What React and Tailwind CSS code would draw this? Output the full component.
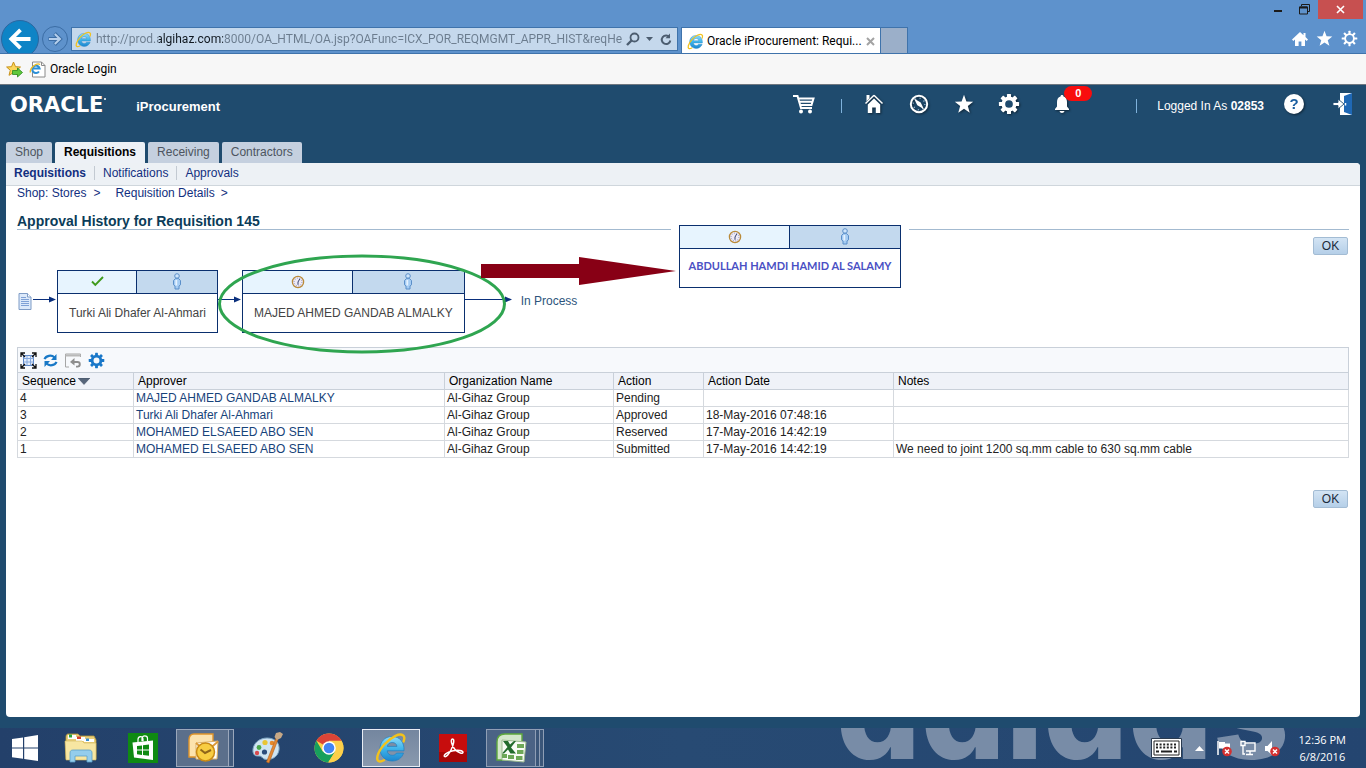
import React from "react";

const gearAngles = [0, 45, 90, 135, 180, 225, 270, 315];

function Gear({ size, color, hub, tooth = 4, stroke = 4, className = "" }) {
  return (
    <svg width={size} height={size} viewBox="0 0 24 24" className={className} aria-hidden="true">
      {gearAngles.map((a) => (
        <rect key={a} x={12 - tooth / 2} y="1" width={tooth} height="5" rx="0.6" fill={color} transform={`rotate(${a} 12 12)`} />
      ))}
      <circle cx="12" cy="12" r="6.2" fill={hub} stroke={color} strokeWidth={stroke} />
    </svg>
  );
}

function Star({ size, color = "#fff" }) {
  return (
    <svg width={size} height={size} viewBox="0 0 24 24" aria-hidden="true">
      <path fill={color} d="M12 1l2.9 7.9 8.1.3-6.4 5.1 2.3 8.1L12 17.6l-6.9 4.8 2.3-8.1L1 9.200l8.100-.3z" />
    </svg>
  );
}

function IeIcon({ size }) {
  return (
    <svg width={size} height={size} viewBox="0 0 32 32" className="shrink-0" aria-hidden="true">
      <defs>
        <linearGradient id="ieBlue" x1="0" y1="0" x2="0" y2="1">
          <stop offset="0" stopColor="#8fdcf9" />
          <stop offset="0.5" stopColor="#3fb4ea" />
          <stop offset="1" stopColor="#1c86cf" />
        </linearGradient>
      </defs>
      <path
        fill="url(#ieBlue)"
        stroke="#1f7fc0"
        strokeWidth="0.7"
        d="M17 4.500C9.800 4.500 5 9.800 5 16.700 5 23.800 10 29 17.200 29c5.600 0 9.700-2.900 11.300-7.900h-7c-.9 1.500-2.300 2.200-4.200 2.200-3 0-4.900-1.700-5.100-4.500H29C29.500 10.300 25 4.500 17 4.500zm-4.700 9.900c.5-2.500 2.300-3.900 4.900-3.900s4.400 1.400 4.800 3.900z"
      />
      <path
        fill="none"
        stroke="#f2c21c"
        strokeWidth="2.400"
        strokeLinecap="round"
        d="M28.600 9.500C31 3.500 27 .8 20.500 3.800 12.500 7.500 4.500 16.500 2.500 24c-1.200 5.200 1.500 6.800 6.500 4.300"
      />
    </svg>
  );
}

function Person() {
  return (
    <svg width="10" height="17" viewBox="0 0 10 17" aria-hidden="true">
      <circle cx="5" cy="3" r="2.300" fill="#cfe5fb" stroke="#5b8fc9" />
      <path d="M3.800 5.300h2.400L8.500 7.500v4.300L7 13v3H3v-3l-1.500-1.200V7.500z" fill="#a5ccf3" stroke="#5b8fc9" />
      <path d="M4.300 7v5.500" stroke="#e6f2ff" strokeWidth="1.800" />
    </svg>
  );
}

function Clock() {
  return (
    <svg width="14" height="14" viewBox="0 0 14 14" aria-hidden="true">
      <circle cx="7" cy="7" r="5.600" fill="#eeeaf6" stroke="#b98a3a" strokeWidth="1.300" />
      <circle cx="7" cy="7" r="3.900" fill="none" stroke="#7f86b4" strokeWidth="0.900" strokeDasharray="1 1.400" />
      <path d="M8.800 3.800L7 7v2.800" stroke="#34406f" strokeWidth="1" fill="none" />
    </svg>
  );
}

function Check() {
  return (
    <svg width="13" height="11" viewBox="0 0 13 11" aria-hidden="true">
      <path d="M1 5.500l3.300 3.300L12 1" fill="none" stroke="#3f9a1c" strokeWidth="1.900" />
    </svg>
  );
}

function Connector({ width }) {
  return (
    <svg width={width} height="8" viewBox={`0 0 ${width} 8`} className="mt-[25px] shrink-0" aria-hidden="true">
      <path d={`M0 4.500H${width - 6}`} stroke="#0a2f7c" />
      <path d={`M${width - 8} 1.500L${width - 1} 4.500L${width - 8} 7.500z`} fill="#0a2f7c" />
    </svg>
  );
}

function ApprovalNode({ status, children }) {
  return (
    <div className="shrink-0 border border-[#0a2f6e] bg-white">
      <div className="grid h-[23px] grid-cols-2 border-b border-[#0a2f6e]">
        <div className="flex items-center justify-center border-r border-[#0a2f6e] bg-[#e7f4fe] pb-px">{status}</div>
        <div className="flex items-center justify-center bg-[#c3d9ee] pb-[2px]">
          <Person />
        </div>
      </div>
      {children}
    </div>
  );
}

function OkButton() {
  return (
    <button className="h-[18px] w-[35px] rounded-xs border border-[#a3bcd4] bg-linear-to-b from-[#d3e4f4] to-[#b5cfe8] text-xs leading-4 text-[#1c2c3c]">
      OK
    </button>
  );
}

function BrowserChrome() {
  return (
    <header className="bg-[#5e92cc]">
      <div className="flex h-5 items-start justify-end pr-[3px]">
        <button aria-label="Minimize" className="flex h-5 w-6 items-center justify-center">
          <svg width="10" height="10" aria-hidden="true"><path d="M1 6h8" stroke="#1b1b1b" strokeWidth="2" /></svg>
        </button>
        <button aria-label="Restore" className="flex h-[19px] w-7 items-center justify-center">
          <svg width="11" height="11" fill="none" stroke="#1b1b1b" aria-hidden="true">
            <path d="M2.500 2V.5h8v7H9M.5 3h8v7h-8z" />
            <path d="M.5 3.500h8" strokeWidth="2" />
          </svg>
        </button>
        <button aria-label="Close" className="flex h-[19px] w-[45px] items-center justify-center bg-[#c75050]">
          <svg width="9" height="9" aria-hidden="true"><path d="M1 1l7 7M8 1L1 8" stroke="#fff" strokeWidth="1.600" /></svg>
        </button>
      </div>
      <div className="flex h-[34px] items-start overflow-hidden border-b border-[#3f73ab] pl-px font-[Roboto,sans-serif]">
        <button aria-label="Back" className="flex size-[38px] shrink-0 items-center justify-center rounded-full border border-[#2b67a0] bg-[#0e84c6]">
          <svg width="24" height="24" fill="none" stroke="#fff" strokeWidth="3.800" aria-hidden="true">
            <path d="M22.500 12H4M12.500 2.800L3.300 12l9.200 9.200" />
          </svg>
        </button>
        <button aria-label="Forward" className="mt-[6px] ml-[3px] flex size-[26px] shrink-0 items-center justify-center rounded-full border border-[#3b6da5]">
          <svg width="16" height="16" fill="none" aria-hidden="true">
            <path d="M1.500 8h12M7.500 2.500L13 8l-5.500 5.500" stroke="#3b6da5" strokeWidth="4" />
            <path d="M2 8h11M7.800 3L13 8l-5.200 5" stroke="#b5cfec" strokeWidth="2" />
          </svg>
        </button>
        <div className="mt-[7px] ml-[3px] flex h-6 w-[607px] items-center border border-[#3f73ab] bg-[#c5d8ec] pl-[3px]">
          <IeIcon size={17} />
          <input
            aria-label="Address"
            defaultValue="http://prod.algihaz.com:8000/OA_HTML/OA.jsp?OAFunc=ICX_POR_REQMGMT_APPR_HIST&reqHe"
            className="ml-1 h-5 min-w-0 flex-1 bg-[linear-gradient(to_right,#6b7c8e_63px,#101820_63px,#101820_127px,#6b7c8e_127px)] bg-clip-text text-[12px] text-transparent outline-none"
          />
          <button aria-label="Search" className="flex w-5 justify-center">
            <svg width="14" height="14" fill="none" stroke="#4c5d70" strokeWidth="1.800" aria-hidden="true">
              <circle cx="8.500" cy="5.500" r="4" /><path d="M5.500 8.500L1 13" strokeWidth="2.400" />
            </svg>
          </button>
          <button aria-label="Search options" className="flex w-3 justify-center">
            <svg width="7" height="4" aria-hidden="true"><path d="M0 0h7L3.500 4z" fill="#4c5d70" /></svg>
          </button>
          <button aria-label="Refresh" className="flex w-[22px] justify-center">
            <svg width="12" height="13" fill="none" stroke="#4c5d70" strokeWidth="2" aria-hidden="true">
              <path d="M9.500 4.200A4.300 4.300 0 1 0 10.300 7.500" /><path d="M10 .5v4.700H5.500z" fill="#4c5d70" stroke="none" />
            </svg>
          </button>
        </div>
        <div className="mt-[7px] ml-[3px] flex h-[27px] w-[200px] items-center border-x border-t border-[#3f73ab] bg-white px-[5px] text-[12px] text-black">
          <IeIcon size={17} />
          <span className="ml-[3px] flex-1 whitespace-nowrap">Oracle iProcurement: Requi...</span>
          <button aria-label="Close tab">
            <svg width="9" height="9" aria-hidden="true"><path d="M1 1l7 7M8 1L1 8" stroke="#a3a3a3" strokeWidth="2" /></svg>
          </button>
        </div>
        <button aria-label="New tab" className="mt-[7px] h-[27px] w-[27px] border-t border-r border-[#3f73ab] bg-[#9bafc9]" />
        <div className="mt-[10px] ml-auto flex items-center gap-2 pr-2">
          <button aria-label="Home">
            <svg width="16" height="16" fill="#fff" aria-hidden="true">
              <path d="M8 1L0 8.500l1.300 1.400L3 8.500V15h3.600v-4.500h2.800V15H13V8.500l1.700 1.400L16 8.500l-2.500-2.400V2h-2v2.200z" />
            </svg>
          </button>
          <button aria-label="Favorites"><Star size={17} /></button>
          <button aria-label="Tools"><Gear size={17} color="#fff" hub="#5e92cc" tooth={3} stroke={2.6} /></button>
        </div>
      </div>
      <nav className="flex h-[31px] items-center border-b border-[#6f7780] bg-[#f7f7f7] pl-[6px] font-[Roboto,sans-serif] text-[12px] text-black">
        <button aria-label="Add to favorites bar">
          <svg width="17" height="17" viewBox="0 0 17 17" aria-hidden="true">
            <path d="M7.500 1l2 4.700 5 .3-3.800 3.300 1.300 5-4.500-2.700L3 14.300l1.300-5L.6 6l4.900-.3z" fill="#fbd65a" stroke="#c8921b" />
            <path d="M6.500 9.500h5V7l5 4.500-5 4.500v-2.500h-5z" fill="#5fc83c" stroke="#2b8a1f" strokeWidth="0.800" />
          </svg>
        </button>
        <a href="#login" className="ml-[6px] flex items-center gap-1">
          <svg width="17" height="17" viewBox="0 0 17 17" aria-hidden="true">
            <path d="M3.500 1h9l3.500 3.500V16h-12.500z" fill="#fff" stroke="#8a8a8a" />
            <path d="M12.500 1v3.500H16" fill="none" stroke="#8a8a8a" />
            <path d="M10 10.500a3.700 3.700 0 1 1 .6-3H4" fill="none" stroke="#2b8fd6" strokeWidth="2" />
            <path d="M11 3.500C8 1.500 1 6 1.200 11.500" fill="none" stroke="#eebb22" strokeWidth="1.300" />
          </svg>
          Oracle Login
        </a>
      </nav>
    </header>
  );
}

function Brand() {
  return (
    <div className="flex h-[57px] items-start text-white">
      <div className="mt-2 ml-[10px] flex h-6 items-center">
        <span className="font-['DejaVu_Sans',sans-serif] text-[21px] leading-6 font-bold">ORACLE</span>
        <svg width="4" height="12" className="mb-1" aria-hidden="true"><circle cx="2" cy="2" r="1" fill="#fff" /></svg>
      </div>
      <h1 className="mt-[14px] ml-auto text-[13px] leading-4 font-bold">iProcurement</h1>
    </div>
  );
}

function HeaderTools() {
  const ink = "drop-shadow-[1px_1px_1px_rgba(0,0,0,0.5)]";
  return (
    <div className="flex items-start pt-[7px] text-xs text-white">
      <div className="flex h-6 items-center">
        <button aria-label="Shopping cart" className="flex w-6 justify-center">
          <svg width="22" height="20" fill="none" stroke="#fff" strokeWidth="2" aria-hidden="true">
            <path d="M0 2h4.500l3.500 12h11" />
            <path d="M5.500 4.500H20.500L18.500 11H7.500M7 7.700h12" />
            <circle cx="8" cy="17.500" r="2" fill="#fff" stroke="none" /><circle cx="17" cy="17.500" r="2" fill="#fff" stroke="none" />
          </svg>
        </button>
        <span className="mt-1 ml-[25px] h-[14px] w-px bg-[#7fb2dc]" />
        <div className="ml-5 flex items-center gap-[21px]">
          <button aria-label="Home" className={"flex w-6 justify-center " + ink}>
            <svg width="20" height="20" fill="#fff" aria-hidden="true">
              <path d="M10 1.200L1.500 9.500M10 1.200l8.500 8.300" stroke="#fff" strokeWidth="1.500" fill="none" />
              <path d="M2.500 1h3v3.200l-3 3zM10 4.500L3.800 10.500V19h4.400v-5.500h3.600V19h4.400v-8.500z" />
            </svg>
          </button>
          <button aria-label="Navigator" className={"flex w-6 justify-center " + ink}>
            <svg width="20" height="20" fill="none" aria-hidden="true">
              <circle cx="10" cy="10" r="8.200" stroke="#fff" strokeWidth="2" />
              <circle cx="10" cy="10" r="5.800" stroke="#9dbcd4" strokeWidth="1.400" strokeDasharray="1 3.550" />
              <path d="M5 4.500l6.700 4 3.300 6.700-6.700-4z" fill="#fff" />
            </svg>
          </button>
          <button aria-label="Favorites" className={"flex w-6 justify-center " + ink}><Star size={20} /></button>
          <button aria-label="Settings" className={"flex w-6 justify-center " + ink}><Gear size={22} color="#fff" hub="#1f4b6e" stroke={4} tooth={4.4} /></button>
        </div>
        <button aria-label="Notifications" className="relative ml-[29px] flex w-6 justify-center">
          <svg width="14" height="18" fill="#fff" className={ink} aria-hidden="true">
            <path d="M7 0c1 0 1.500.7 1.500 1.500C11 2.200 12 4.500 12 7v4.500l2 2.500v1H0v-1l2-2.500V7c0-2.500 1-4.800 3.500-5.500C5.500.7 6 0 7 0zM4.500 16h5c-.5 2.500-4.500 2.500-5 0z" />
          </svg>
          <span className="absolute -top-[9px] left-[14px] flex h-[15px] w-7 items-center justify-center rounded-full bg-[#f80d0d] text-[11px] font-bold">0</span>
        </button>
        <span className="mt-1 ml-[62px] h-[14px] w-px bg-[#7fb2dc]" />
        <span className="mt-1 ml-5">Logged In As <b>02853</b></span>
        <button aria-label="Help" className={"ml-5 flex size-5 items-center justify-center rounded-full bg-white text-[15px] font-bold text-[#1c5fa0] " + ink}>?</button>
        <button aria-label="Logout" className="mr-[10px] ml-7">
          <svg width="24" height="24" aria-hidden="true">
            <path d="M8 1h12v22H8z" fill="#fff" />
            <path d="M12 4l8-3v22l-8-3z" fill="#1f68b5" />
            <path d="M13.500 11v2.500" stroke="#fff" strokeWidth="1.500" />
            <path d="M1 10.500h5V7l6 5-6 5v-3.500H1z" fill="#fff" stroke="#1f4b6e" strokeWidth="0.900" />
          </svg>
        </button>
      </div>
    </div>
  );
}

const tabs = ["Shop", "Requisitions", "Receiving", "Contractors"];

const rows = [
  ["4", "MAJED AHMED GANDAB ALMALKY", "Al-Gihaz Group", "Pending", "", ""],
  ["3", "Turki Ali Dhafer Al-Ahmari", "Al-Gihaz Group", "Approved", "18-May-2016 07:48:16", ""],
  ["2", "MOHAMED ELSAEED ABO SEN", "Al-Gihaz Group", "Reserved", "17-May-2016 14:42:19", ""],
  ["1", "MOHAMED ELSAEED ABO SEN", "Al-Gihaz Group", "Submitted", "17-May-2016 14:42:19", "We need to joint 1200 sq.mm cable to 630 sq.mm cable"],
];

function ApprovalFlow() {
  return (
    <div className="relative mt-[15px] flex items-start pl-px text-xs">
      <svg width="14" height="17" className="mt-[23px] mr-px shrink-0" aria-hidden="true">
        <path d="M1 .5h8.500l3.500 3.500v12.500H1z" fill="#dce9fa" stroke="#7f9cc6" />
        <path d="M9.500.5V4H13" fill="#fff" stroke="#7f9cc6" />
        <path d="M3 4.500h5M3 6.500h8M3 8.500h8M3 10.500h8M3 12.500h8" stroke="#7fa1d6" />
      </svg>
      <Connector width={24} />
      <ApprovalNode status={<Check />}>
        <p className="px-[11px] leading-[38px] text-[#444]">Turki Ali Dhafer Al-Ahmari</p>
      </ApprovalNode>
      <Connector width={24} />
      <ApprovalNode status={<Clock />}>
        <p className="px-[11px] leading-[38px] text-[#444]">MAJED AHMED GANDAB ALMALKY</p>
      </ApprovalNode>
      <Connector width={48} />
      <span className="mt-[23px] ml-2 leading-4 text-[#2d547c]">In Process</span>

      <svg width="292" height="100" fill="none" className="absolute -top-[16px] left-[200px]" aria-hidden="true">
        <ellipse cx="145" cy="50" rx="142.500" ry="48" stroke="#2fa550" strokeWidth="3" />
      </svg>
      <div className="absolute -top-[45px] left-[654px] bg-white px-2">
        <div className="w-[222px]">
          <ApprovalNode status={<Clock />}>
            <p className="text-center font-['Lato',sans-serif] text-[11px] leading-[34px] font-bold whitespace-nowrap text-[#4a50c4] pb-1">
              ABDULLAH HAMDI HAMID AL SALAMY
            </p>
          </ApprovalNode>
        </div>
      </div>
      <svg width="196" height="28" className="absolute -top-[13px] left-[464px]" aria-hidden="true">
        <path d="M0 7h98V0l97 14-97 14v-7H0z" fill="#880015" />
      </svg>
    </div>
  );
}

function HistoryTable() {
  return (
    <section className="mt-[14px]">
      <div className="flex h-[25px] items-center gap-[6px] border border-b-0 border-[#c9d0d9] bg-[#f7f9fc] pl-[2px]">
        <button aria-label="Detach">
          <svg width="17" height="17" fill="none" aria-hidden="true">
            <rect x="3.500" y="3.500" width="10" height="10" fill="#e3edfb" stroke="#5b84c4" />
            <path d="M3.500 6.500h10M3.500 10h10M7 3.500v10M10.500 3.500v10" stroke="#86a9de" />
            <path d="M1 5V1h4M12 1h4v4M16 12v4h-4M5 16H1v-4M1 1l4 4M16 1l-4 4M16 16l-4-4M1 16l4-4" stroke="#111" strokeWidth="1.300" />
          </svg>
        </button>
        <button aria-label="Refresh">
          <svg width="15" height="15" fill="none" stroke="#1878c6" strokeWidth="2.200" aria-hidden="true">
            <path d="M1.500 6.200C3 2.500 8.500 1.500 11.500 4.500M13.500 8.800C12 12.500 6.500 13.500 3.500 10.500" />
            <path d="M13.500 1v6H8zM1.500 14V8H7z" fill="#1878c6" stroke="none" />
          </svg>
        </button>
        <button aria-label="Reset view" className="ml-px">
          <svg width="17" height="15" fill="none" aria-hidden="true">
            <path d="M15.500 4V1H.5v13H4" stroke="#a6a6a6" /><path d="M.5 2.500h15" stroke="#b9b9b9" strokeWidth="2" />
            <path d="M8 9h4.500a2.300 2.300 0 0 1 0 4.600H11" stroke="#8e8e8e" strokeWidth="1.900" /><path d="M9.500 5v7.500L5 9z" fill="#8e8e8e" />
          </svg>
        </button>
        <button aria-label="Table settings"><Gear size={17} color="#1a78c9" hub="#f7f9fc" stroke={4} /></button>
      </div>
      <table className="w-full table-fixed border-collapse text-left text-xs leading-4 text-[#222]">
        <colgroup>
          <col className="w-[116px]" /><col className="w-[311px]" /><col className="w-[169px]" />
          <col className="w-[90px]" /><col className="w-[190px]" /><col />
        </colgroup>
        <thead className="bg-[#eff2f8]">
          <tr>
            {["Sequence", "Approver", "Organization Name", "Action", "Action Date", "Notes"].map((h) => (
              <th key={h} scope="col" className="border border-[#c9d0d9] px-1 py-0 font-normal text-black">
                {h}
                {h === "Sequence" && (
                  <svg width="12" height="7" className="ml-[2px] inline-block align-baseline" aria-hidden="true">
                    <path d="M0 0h12L6 6.500z" fill="#56657a" stroke="#39475c" strokeWidth="0.500" />
                  </svg>
                )}
              </th>
            ))}
          </tr>
        </thead>
        <tbody>
          {rows.map((r) => (
            <tr key={r[0]}>
              {r.map((c, i) => (
                <td key={i} className="h-[17px] border border-[#d5d9de] px-[2px] py-0 whitespace-nowrap">
                  {i === 1 ? <a href="#approver" className="text-[#17437a]">{c}</a> : c}
                </td>
              ))}
            </tr>
          ))}
        </tbody>
      </table>
    </section>
  );
}

function Page() {
  return (
    <main className="flex flex-1 flex-col bg-[#1f4b6e] pb-[11px] font-['Liberation_Sans',Arial,sans-serif]">
      <div className="flex items-start justify-between">
        <div className="w-[220px]"><Brand /></div>
        <HeaderTools />
      </div>
      <nav className="flex gap-[3px] pl-[6px] text-xs">
        {tabs.map((t) => (
          <a
            key={t}
            href={"#" + t}
            className={
              t === "Requisitions"
                ? "rounded-t-xs bg-[#edf1f6] px-[9px] leading-[21px] font-bold text-black"
                : "rounded-t-xs bg-[#c5d0df] px-[9px] leading-[21px] text-[#4d5560]"
            }
          >
            {t}
          </a>
        ))}
      </nav>
      <div className="mr-[6px] ml-[6px] flex-1 rounded-b-sm rounded-tr-sm bg-white">
        <nav className="flex h-[23px] items-center rounded-tr-sm border-b border-[#cfd6dc] bg-[#edf1f5] pb-[2px] pl-2 text-xs text-[#122f80]">
          <a href="#req" className="font-bold">Requisitions</a>
          <span className="mx-2 h-[14px] w-px bg-[#c3cad2]" />
          <a href="#not">Notifications</a>
          <span className="mx-2 h-[14px] w-px bg-[#c3cad2]" />
          <a href="#app">Approvals</a>
        </nav>
        <div className="px-[11px]">
          <nav className="flex text-xs leading-[14px] text-[#122f80]">
            <a href="#stores">Shop: Stores</a>
            <span className="ml-[7px]">&gt;</span>
            <a href="#details" className="ml-[15px]">Requisition Details</a>
            <span className="ml-[6px]">&gt;</span>
          </nav>
          <h2 className="mt-[13px] border-b border-[#a3bad0] text-[14px] leading-4 font-bold text-[#0b3c59]">
            Approval History for Requisition 145
          </h2>
          <div className="mt-[7px] flex justify-end pr-px"><OkButton /></div>
          <ApprovalFlow />
          <HistoryTable />
          <div className="mt-8 flex justify-end pr-px"><OkButton /></div>
        </div>
      </div>
    </main>
  );
}

function Task({ label, children }) {
  return (
    <button aria-label={label} className="flex h-10 w-[62px] shrink-0 items-center justify-center">
      {children}
    </button>
  );
}

function Taskbar() {
  return (
    <footer className="relative flex h-10 items-center overflow-hidden bg-linear-to-r from-[#23406a] via-[#274a73] to-[#244570]">
      <span
        aria-hidden="true"
        className="absolute -top-[97px] left-[836px] font-['Inter',sans-serif] text-[133px] leading-[160px] font-extrabold text-[#788ca7] [font-feature-settings:'cv11','ss01']"
      >
        adidas
      </span>
      <button aria-label="Start" className="flex h-10 w-[50px] shrink-0 items-center justify-center">
        <svg width="26" height="26" fill="#fff" aria-hidden="true">
          <path d="M0 4l11-1.600v10H0zM12.200 2.200L26 0v12.400H12.200zM0 13.600h11v10.200L0 22.200zM12.200 13.600H26V26l-13.800-2z" />
        </svg>
      </button>
      <Task label="File Explorer">
        <svg width="34" height="30" aria-hidden="true">
          <path d="M2 4c0-2 1-3 2-3h10l2 2h14l2 4v19H2z" fill="#e9cf7a" stroke="#b99a3c" strokeWidth="0.800" />
          <path d="M4 2h8v4H4z" fill="#fff" /><path d="M5 1.500h3v3H5z" fill="#2aa53c" />
          <path d="M12 4h9v4h-9z" fill="#fff" /><path d="M13 3.500h4v2.500h-4z" fill="#d5422e" />
          <path d="M20 6h10v3H20z" fill="#fff" /><path d="M22 5.500h3v2.500h-3z" fill="#3a8fd0" />
          <path d="M1 8h17l2 2h12v17H2z" fill="#f7e6a2" stroke="#d1b65c" strokeWidth="0.600" />
          <path d="M6 29V20c0-2 1-3 3-3h16c2 0 3 1 3 3v9h-5v-6H11v6z" fill="#94cdec" stroke="#5a9fc8" strokeWidth="0.800" />
        </svg>
      </Task>
      <Task label="Store">
        <svg width="30" height="30" fill="none" aria-hidden="true">
          <path d="M0 0h30v30H0z" fill="#0f8a12" />
          <path d="M4.500 9.500L25 7.500V27L6 24.500z" fill="#fff" />
          <path d="M10 9V6.500c0-3.500 5-4 5-.5v2.500M14 8V5.500c0-3.500 5.500-3.500 5.500 0V8" stroke="#fff" strokeWidth="1.200" />
          <path d="M9 13l5-.6v4.200H9zM15 12.200l6-.7v5.100h-6zM9 17.600h5v4.300l-5-.6zM15 17.600h6v5.200l-6-.8z" fill="#0f8a12" />
        </svg>
      </Task>
      <Task label="Outlook">
        <span className="flex h-[38px] w-[58px]">
          <span className="flex flex-1 items-center justify-center border border-[#9aa7bb] bg-[#5b6f8b]">
            <svg width="32" height="30" aria-hidden="true">
              <path d="M2 7c0-4 2-6 5-6h19v10H14v13H2z" fill="#fce3ae" stroke="#e0952b" strokeWidth="1.400" />
              <path d="M9 10l22-2-1 18H9z" fill="#fdfdfb" stroke="#ddb26a" />
              <path d="M9 10l10 9L31 8.500" fill="none" stroke="#dc9a38" strokeWidth="1.800" />
              <circle cx="18.500" cy="19" r="9" fill="#f8cd42" stroke="#c98a15" strokeWidth="1.500" />
              <path d="M13.500 16.500l4.500 3.500 6-3" fill="none" stroke="#8f651a" strokeWidth="2" />
            </svg>
          </span>
          <span className="w-[5px] border border-l-0 border-[#9aa7bb] bg-[#415a7c]" />
        </span>
      </Task>
      <Task label="Paint">
        <svg width="34" height="32" aria-hidden="true">
          <path d="M3 20C2 12 9 6 17 6s13 5 12 12-8 11-15 9c-2-1-2-3-5-3s-5 0-6-4z" fill="#cfe4f2" stroke="#7fa6c4" />
          <circle cx="9" cy="15.500" r="2.400" fill="#49a64a" /><circle cx="15" cy="10.500" r="2.600" fill="#e9c534" />
          <circle cx="7" cy="21" r="2.200" fill="#d84b50" /><circle cx="22" cy="11" r="2.300" fill="#e5892d" /><circle cx="14.500" cy="20" r="2.600" fill="#2c4d7c" />
          <path d="M26 6l2 1.500L19 31l-2.500-1z" fill="#e48834" stroke="#b25f18" strokeWidth="0.600" />
          <path d="M24.500 5L26 1l4-1 3 2-2 4-4 2z" fill="#c7a886" />
        </svg>
      </Task>
      <Task label="Chrome">
        <svg width="30" height="30" viewBox="0 0 30 30" aria-hidden="true">
          <circle cx="15" cy="15" r="14.500" fill="#fdd04a" />
          <path d="M15 15L2.400 7.750A14.500 14.500 0 0 1 27.600 7.750H15z" fill="#db4437" />
          <path d="M2.400 7.750A14.500 14.500 0 0 0 14 29.500L21.300 18.600 15 15 8.700 18.600z" fill="#17a05d" />
          <path d="M15 8.200h12.800A14.500 14.500 0 0 1 14.500 29.500L21 18.500z" fill="#fdd04a" />
          <circle cx="15" cy="15" r="6.800" fill="#fff" /><circle cx="15" cy="15" r="5.300" fill="#4285f4" />
        </svg>
      </Task>
      <Task label="Internet Explorer">
        <span className="flex h-[38px] w-[58px] items-center justify-center border border-[#e8edf4] bg-linear-to-b from-[#74869f] to-[#8999ae]">
          <IeIcon size={32} />
        </span>
      </Task>
      <Task label="Acrobat Reader">
        <svg width="28" height="28" fill="none" aria-hidden="true">
          <path d="M0 0h28v28H0z" fill="#c70d0d" /><path d="M0 18h28v10H0z" fill="#a80606" />
          <path d="M13.500 5c2.500 0 1 6-1.500 11-2 4-5 7.500-6.500 6.500S8 18 14 16.800c5-1 10-.3 10 1.500s-4.500 1-8-2.800-4.800-10.500-2.500-10.500z" stroke="#fff" strokeWidth="1.500" />
        </svg>
      </Task>
      <Task label="Excel">
        <span className="flex h-[38px] w-[58px]">
          <span className="flex flex-1 items-center justify-center border border-[#8f9eb5] bg-[#4b6385]">
            <svg width="32" height="30" aria-hidden="true">
              <path d="M2 9c0-5 3-8 8-8h17v9H14v17H2z" fill="#d4e7cb" stroke="#5da83c" strokeWidth="1.400" />
              <path d="M7 7l24 2-2 20-22-2z" fill="#f8fbf5" stroke="#9cba90" />
              <path d="M22 11h7v4h-7zM22 17h6.500v4H22zM13 22h6v4h-6zM21 23h6.500v4H21zM7 21h5v4H7z" fill="#6da858" />
              <path d="M8 8h5l2 3.500L19 8h2l-5 6.500 5 6h-5.500l-2.500-4-4 4H7l5.500-6.500z" fill="#226b2c" />
            </svg>
          </span>
          <span className="w-1 border border-l-0 border-[#8f9eb5] bg-[#3b5679]" />
          <span className="w-1 border border-l-0 border-[#8f9eb5] bg-[#3b5679]" />
        </span>
      </Task>
      <div className="relative ml-auto flex items-center pr-5 font-['Open_Sans','Noto_Sans',sans-serif] text-[11px] text-white">
        <button aria-label="Touch keyboard">
          <svg width="31" height="20" fill="none" aria-hidden="true">
            <path d="M.5.500h30v19H.5z" fill="#fff" stroke="#2b3b50" />
            <path d="M3 3h25v14H3z" stroke="#222" />
            <path d="M5 6.500h21M5 9.500h21" stroke="#222" strokeWidth="2" strokeDasharray="2 1.600" />
            <path d="M5 13.500h3M10 13.500h11M23 13.500h3" stroke="#222" strokeWidth="2" />
          </svg>
        </button>
        <button aria-label="Show hidden icons" className="ml-[13px]">
          <svg width="9" height="5" aria-hidden="true"><path d="M4.500 0L9 5H0z" fill="#fff" /></svg>
        </button>
        <button aria-label="Action Center" className="ml-3">
          <svg width="17" height="17" aria-hidden="true">
            <path d="M2 1v14" stroke="#fff" strokeWidth="1.500" /><path d="M3 2h6v1.500h5V10H9V8.500H3z" fill="#fff" />
            <circle cx="11" cy="11.500" r="4.800" fill="#d3302f" /><path d="M9 9.500l4 4M13 9.500l-4 4" stroke="#fff" strokeWidth="1.500" />
          </svg>
        </button>
        <button aria-label="Network" className="ml-[7px]">
          <svg width="16" height="16" fill="none" stroke="#fff" strokeWidth="1.400" aria-hidden="true">
            <path d="M5 3h10v8H6M10 11v3M6 14.500h7" /><path d="M1 1.500h4v4H1zM3 5.500V14h2" />
          </svg>
        </button>
        <button aria-label="Volume muted" className="ml-2">
          <svg width="17" height="17" aria-hidden="true">
            <path d="M1 6h2.500L8 1v14L3.500 11H1z" fill="#fff" />
            <circle cx="11" cy="11.500" r="4.800" fill="#d3302f" /><path d="M9 9.500l4 4M13 9.500l-4 4" stroke="#fff" strokeWidth="1.500" />
          </svg>
        </button>
        <div className="ml-[18px] text-center leading-[17px]">
          <p>12:36 PM</p>
          <p>6/8/2016</p>
        </div>
      </div>
    </footer>
  );
}

export default function App() {
  return (
    <div className="flex min-h-screen flex-col">
      <BrowserChrome />
      <Page />
      <Taskbar />
    </div>
  );
}
